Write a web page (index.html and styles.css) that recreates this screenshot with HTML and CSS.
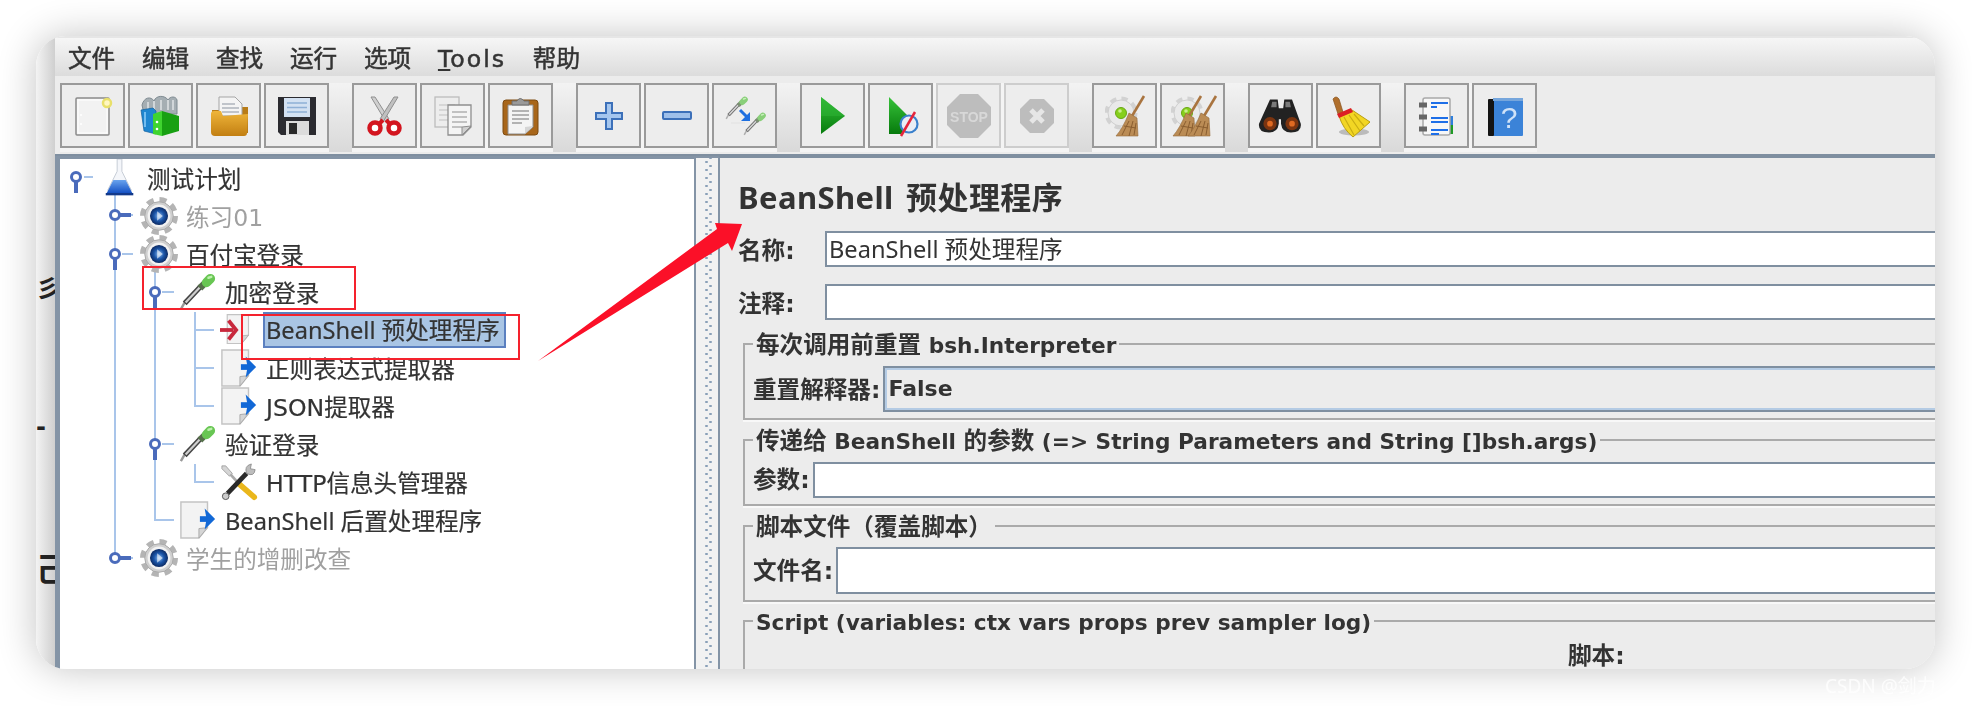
FILE: index.html
```html
<!DOCTYPE html>
<html>
<head>
    <title>BeanShell PreProcessor</title>
    <link rel="stylesheet" href="styles.css">
</head>
<body>
    <svg class="defs">
        <defs>
            <linearGradient id="greenPlay" x1="0" y1="0" x2="0" y2="1">
                <stop offset="0" stop-color="#37c23a"/>
                <stop offset="1" stop-color="#067a0c"/>
            </linearGradient>
            <radialGradient id="blueBall">
                <stop offset="0" stop-color="#8fbdf0"/>
                <stop offset=".55" stop-color="#1b55a8"/>
                <stop offset="1" stop-color="#0c2a63"/>
            </radialGradient>
            <linearGradient id="folderFront" x1="0" y1="0" x2="0" y2="1">
                <stop offset="0" stop-color="#efb53a"/>
                <stop offset="1" stop-color="#c27f12"/>
            </linearGradient>
            <linearGradient id="flaskBlue" x1="0" y1="0" x2="0" y2="1">
                <stop offset="0" stop-color="#6aa4ee"/>
                <stop offset="1" stop-color="#1350c4"/>
            </linearGradient>
            <symbol id="gear" viewBox="0 0 40 40">
                <circle cx="20" cy="20" r="17" fill="none" stroke="#b4b4b4" stroke-width="6" stroke-dasharray="7.3 6.05"/>
                <circle cx="20" cy="20" r="15" fill="#cfcfcf" stroke="#a8a8a8"/>
                <circle cx="20" cy="20" r="12" fill="#f2f2f2"/>
                <circle cx="20" cy="20" r="9.5" fill="url(#blueBall)"/>
                <path d="M18 15l6 5-6 5z" fill="#fff" opacity=".6"/>
            </symbol>
            <symbol id="dropper" viewBox="0 0 40 40">
                <path d="M2 38l4-7" stroke="#999" stroke-width="2.5"/>
                <path d="M6 32l17-18" stroke="#444" stroke-width="5.5"/>
                <path d="M7 31l15-16" stroke="#cfcfcf" stroke-width="2.4"/>
                <path d="M22 16l5-5" stroke="#55704a" stroke-width="7"/>
                <path d="M29 10l4-4" stroke="#68c653" stroke-width="10" stroke-linecap="round"/>
                <path d="M31 5l3-1" stroke="#bdf0ad" stroke-width="2.5" stroke-linecap="round"/>
            </symbol>
            <symbol id="page" viewBox="0 0 40 40">
                <path d="M2 1h28v27l-9 11H2z" fill="#f3f3f3" stroke="#c3c3c3" stroke-width="1.5"/>
                <path d="M30 28l-9 1v10z" fill="#d5d5d5" stroke="#aaa"/>
            </symbol>
            <symbol id="broomTan" viewBox="0 0 40 40" overflow="visible">
                <path d="M39 0L27 20" stroke="#a9743f" stroke-width="2.6"/>
                <path d="M24 17l8 5 1 18H11q7-8 13-23z" fill="#bb8c55" stroke="#94693a" stroke-width=".6"/>
                <path d="M24 25l-7 14M28 25l-4 15M31 27l-2 12M19 30l12 2" stroke="#8a5e30" stroke-width="1"/>
            </symbol>
            <symbol id="gearGreen" viewBox="0 0 40 40">
                <circle cx="16" cy="17" r="14" fill="none" stroke="#d2d2d2" stroke-width="5" stroke-dasharray="6 5"/>
                <circle cx="16" cy="17" r="13" fill="#e9e9e9" stroke="#cfcfcf"/>
                <circle cx="16" cy="17" r="5.5" fill="#86cf1c" stroke="#6aa814"/>
                <circle cx="15" cy="15" r="1.8" fill="#c9f08a"/>
            </symbol>
        </defs>
    </svg>

    <div class="card">
        <div class="strip">
            <span class="scrap scrap-a">彡</span>
            <span class="scrap scrap-b">-</span>
            <span class="scrap scrap-c">己:</span>
        </div>
        <div class="window">
            <div class="menubar">
                <span class="menu">文件</span>
                <span class="menu">编辑</span>
                <span class="menu">查找</span>
                <span class="menu">运行</span>
                <span class="menu">选项</span>
                <span class="menu menu-latin"><u>T</u>ools</span>
                <span class="menu">帮助</span>
            </div>

            <div class="toolbar">
                <div class="group">
                    <div class="btn"><svg viewBox="0 0 40 40"><rect x="3" y="2" width="33" height="37" rx="1" fill="#f2f2f2" stroke="#8a8a8a" stroke-width="1.5"/><rect x="5" y="4" width="29" height="33" fill="none" stroke="#fff"/><circle cx="8" cy="19" r="1" fill="#fff"/><circle cx="8" cy="28" r="1" fill="#fff"/><circle cx="34" cy="7" r="4" fill="#fff7c0" stroke="#e9e06a" stroke-width="2.5"/></svg></div>
                    <div class="btn"><svg viewBox="0 0 40 40"><path d="M1 9c2-8 9-9 12-4 2-6 11-6 14-1 2-4 8-4 9 0v14H3z" fill="#a5aeb3" stroke="#7f8b92"/><path d="M7 6v10M13 5v10M20 4v10M27 4v10M32 4v10" stroke="#dfe4e6" stroke-width="1.5"/><path d="M0 14l12-2 3 3v23L3 35z" fill="#1f86d0" stroke="#12609e" stroke-width=".7"/><path d="M4 16v15" stroke="#73bdf0" stroke-width="2"/><path d="M21 15l17 5v15l-17 5z" fill="#18a012"/><path d="M12 18l9-3v25l-9-2z" fill="#3fd42f"/><circle cx="16" cy="26" r="1.3" fill="#fff"/><circle cx="16" cy="33" r="1.3" fill="#fff"/></svg></div>
                    <div class="btn"><svg viewBox="0 0 40 40"><path d="M3 14h8l2-3h26v26H4z" fill="#b87c17"/><path d="M10 1h16l7 7v20H10z" fill="#f4f4f4" stroke="#a5a5a5"/><path d="M13 8h13M13 12h17M13 16h17M13 20h17" stroke="#aeb4bc" stroke-width="1.3"/><path d="M2 18q0-3 3-3h7l2 5 25-2-1 19q0 3-3 3H6q-4 0-4-4z" fill="url(#folderFront)"/></svg></div>
                    <div class="btn"><svg viewBox="0 0 40 40"><path d="M1 1h38v38H4l-3-3z" fill="#2b2b30"/><rect x="7" y="2" width="26" height="19" fill="#d3e1f2"/><path d="M10 7h20M10 11.500h20M10 16h20" stroke="#8fb0d6" stroke-width="1.5"/><rect x="9" y="25" width="23" height="14" fill="#dcdcdc"/><rect x="12" y="27" width="8" height="11" fill="#2a2a2a"/></svg></div>
                </div>
                <div class="sep"></div>
                <div class="group">
                    <div class="btn"><svg viewBox="0 0 40 40"><path d="M6 1l15 25 3-3L10 1z" fill="#cfcfcf" stroke="#8f8f8f"/><path d="M33 1L18 26l-3-3L29 1z" fill="#c0c0c0" stroke="#8f8f8f"/><circle cx="10" cy="32" r="5.5" fill="#fff" stroke="#d3151f" stroke-width="4.5"/><circle cx="29" cy="32" r="5.5" fill="#fff" stroke="#d3151f" stroke-width="4.5"/><path d="M14 28l4-4M25 28l-4-4" stroke="#d3151f" stroke-width="4"/></svg></div>
                    <div class="btn"><svg viewBox="0 0 40 40"><rect x="2" y="1" width="24" height="30" fill="#ededed" stroke="#bcbcbc" stroke-width="1.3"/><path d="M6 9h16M6 14h16M6 19h16M6 24h16" stroke="#d0d0d0" stroke-width="1.3"/><path d="M15 9h23v22l-8 8H15z" fill="#f4f4f4" stroke="#8f8f8f" stroke-width="1.3"/><path d="M19 16h15M19 21h15M19 26h15M19 31h10" stroke="#b0b0b0" stroke-width="1.5"/><path d="M38 30l-9 1v8z" fill="#cfcfcf" stroke="#8f8f8f"/></svg></div>
                    <div class="btn"><svg viewBox="0 0 40 40"><rect x="2" y="4" width="35" height="35" rx="3" fill="#a8661a" stroke="#7d4a10"/><path d="M7 9h25v22l-8 7H7z" fill="#f4f4f4" stroke="#8f8f8f"/><path d="M11 15h17M11 19h17M11 23h17M11 27h10" stroke="#9d9d9d" stroke-width="1.5"/><path d="M32 30l-8 1v7z" fill="#d5d5d5"/><path d="M11 9V5h5q3-5 7 0h5v4z" fill="#9a9a9a" stroke="#6f6f6f"/></svg></div>
                </div>
                <div class="sep"></div>
                <div class="group">
                    <div class="btn"><svg viewBox="0 0 40 40"><path d="M17 7h6v10h10v6H23v10h-6V23H7v-6h10z" fill="#a5c6ee" stroke="#3c70b9" stroke-width="2"/></svg></div>
                    <div class="btn"><svg viewBox="0 0 40 40"><rect x="6" y="16" width="28" height="7" rx="1" fill="#9fc0ea" stroke="#3c70b9" stroke-width="2"/></svg></div>
                    <div class="btn"><svg viewBox="0 0 40 40"><use href="#dropper" x="0" y="0" width="24" height="24" opacity=".75"/><use href="#dropper" x="18" y="16" width="24" height="24" opacity=".75"/><path d="M6 27h14" stroke="#e4e4e4" stroke-width="1.5"/><path d="M15 14l7 7" stroke="#1e6fe0" stroke-width="3"/><path d="M25 16v9h-9z" fill="#1e6fe0"/></svg></div>
                </div>
                <div class="sep"></div>
                <div class="group">
                    <div class="btn"><svg viewBox="0 0 40 40"><path d="M8 1l24 19L8 38z" fill="url(#greenPlay)"/><path d="M8 1l24 19H8z" fill="#2eb334" opacity=".55"/></svg></div>
                    <div class="btn"><svg viewBox="0 0 40 40"><path d="M8 1l24 24-12 13H8z" fill="url(#greenPlay)"/><circle cx="28" cy="28" r="8.500" fill="#e9eef5" stroke="#3a80cc" stroke-width="2.2"/><path d="M20 40L34 16" stroke="#e5243b" stroke-width="2.5"/></svg></div>
                    <div class="btn off"><svg class="big" viewBox="0 0 44 44"><path d="M13 0h18l13 13v18L31 44H13L0 31V13z" fill="#bdbdbd"/><text x="22" y="28" class="stop-text">STOP</text></svg></div>
                    <div class="btn off"><svg viewBox="0 0 40 40"><path d="M13 3h14l10 10v14L27 37H13L3 27V13z" fill="#bdbdbd"/><path d="M14 14l12 12M26 14L14 26" stroke="#e6e6e6" stroke-width="5"/></svg></div>
                </div>
                <div class="sep"></div>
                <div class="group">
                    <div class="btn"><svg viewBox="0 0 40 40"><use href="#gearGreen" width="40" height="40"/><use href="#broomTan" width="40" height="40"/></svg></div>
                    <div class="btn"><svg viewBox="0 0 40 40"><use href="#gearGreen" x="-2" width="40" height="40"/><use href="#broomTan" x="-11" width="40" height="40"/><use href="#broomTan" x="4" width="40" height="40"/></svg></div>
                </div>
                <div class="sep"></div>
                <div class="group">
                    <div class="btn"><svg class="big" viewBox="0 0 40 40"><g transform="translate(0 -3)"><path d="M10 8h7l1 8h4l1-8h7l8 22q1 8-9 8-8 0-9-8v-4h-2v4q-1 8-9 8-10 0-9-8z" fill="#222"/><path d="M12 10h4v5h-5zM24 10h4l1 5h-5z" fill="#7a7a7a"/><circle cx="10" cy="30" r="6" fill="#7a3410"/><circle cx="30" cy="30" r="6" fill="#7a3410"/><circle cx="10" cy="30" r="2.6" fill="#e06a22"/><circle cx="30" cy="30" r="2.6" fill="#e06a22"/></g></svg></div>
                    <div class="btn"><svg viewBox="0 0 40 40"><ellipse cx="25" cy="36" rx="15" ry="3.5" fill="#bbb"/><path d="M4 3q3-4 6 0l4 13-5 2z" fill="#b06f2c" stroke="#8a5520" stroke-width=".7"/><path d="M10 20l13-6 18 12-17 15q-10-8-14-21z" fill="#f2d624" stroke="#b99e10"/><path d="M8 18l14-6 2 4-14 6z" fill="#dc1f24"/><path d="M15 21l10 18M20 19l11 16M25 18l10 12" stroke="#c9ad14" stroke-width="1.2"/></svg></div>
                </div>
                <div class="sep"></div>
                <div class="group">
                    <div class="btn"><svg viewBox="0 0 40 40"><rect x="30" y="20" width="6" height="9" fill="#2f7fdc"/><rect x="30" y="29" width="6" height="9" fill="#1f9a25"/><rect x="6" y="2" width="27" height="37" rx="2" fill="#f7f7f7" stroke="#a9a9a9" stroke-width="1.5"/><path d="M2 9h8M2 21h8M2 33h8" stroke="#666" stroke-width="5"/><path d="M14 7h17M14 11h6M14 22h17M14 26h17M14 34h17M14 38h8" stroke="#1e6fe8" stroke-width="2"/></svg></div>
                    <div class="btn"><svg viewBox="0 0 40 40"><rect x="8" y="2" width="30" height="38" rx="1" fill="#3b83d8"/><rect x="3" y="3" width="6" height="37" rx="1" fill="#141414"/><rect x="8" y="2" width="30" height="3" fill="#76a6dc"/><text x="24" y="32" class="help-text">?</text></svg></div>
                </div>
            </div>

            <div class="split">
                <div class="tree">
                    <svg class="links" viewBox="0 0 600 510">
                        <path class="link" d="M55 30V400M95 112V361H114M135 153V248M135 171H154M135 209H154M135 247H154M135 305V323H154M24 18H33M62 56H73M62 95H73M102 133H114M102 285H114M62 399H73"/>
                        <g class="knob"><path d="M16 18V34"/><circle cx="16" cy="18" r="4.500"/></g>
                        <g class="knob"><path d="M55 56H71"/><circle cx="55" cy="56" r="4.500"/></g>
                        <g class="knob"><path d="M55 95V111"/><circle cx="55" cy="95" r="4.500"/></g>
                        <g class="knob"><path d="M95 133V149"/><circle cx="95" cy="133" r="4.500"/></g>
                        <g class="knob"><path d="M95 285V301"/><circle cx="95" cy="285" r="4.500"/></g>
                        <g class="knob"><path d="M55 399H71"/><circle cx="55" cy="399" r="4.500"/></g>
                    </svg>
                    <div class="row l0">
                        <svg class="ticon" viewBox="0 0 40 40"><path d="M17 0h5v13l10 20H7l10-20z" fill="#f4f6fa" stroke="#c4cad4"/><path d="M13 22h13l7 14H6z" fill="url(#flaskBlue)"/><path d="M5 37h29" stroke="#12398a" stroke-width="2.500"/></svg>
                        <span>测试计划</span>
                    </div>
                    <div class="row l1 muted"><svg class="ticon"><use href="#gear"/></svg><span>练习01</span></div>
                    <div class="row l1"><svg class="ticon"><use href="#gear"/></svg><span>百付宝登录</span></div>
                    <div class="row l2"><svg class="ticon"><use href="#dropper"/></svg><span>加密登录</span></div>
                    <div class="row l3">
                        <svg class="ticon" viewBox="0 0 40 40"><use href="#page" x="6" y="0" width="32" height="38"/><path d="M0 20h14" stroke="#c8283c" stroke-width="4"/><path d="M9 10l8 10-8 10" fill="none" stroke="#c8283c" stroke-width="4"/></svg>
                        <span class="picked narrow">BeanShell 预处理程序</span>
                    </div>
                    <div class="row l3">
                        <svg class="ticon" viewBox="0 0 40 40"><use href="#page"/><path d="M22 19h10" stroke="#1268d6" stroke-width="6"/><path d="M27 8l11 11-11 11 2-11z" fill="#1268d6"/></svg>
                        <span>正则表达式提取器</span>
                    </div>
                    <div class="row l3">
                        <svg class="ticon" viewBox="0 0 40 40"><use href="#page"/><path d="M22 19h10" stroke="#1268d6" stroke-width="6"/><path d="M27 8l11 11-11 11 2-11z" fill="#1268d6"/></svg>
                        <span>JSON提取器</span>
                    </div>
                    <div class="row l2"><svg class="ticon"><use href="#dropper"/></svg><span>验证登录</span></div>
                    <div class="row l3">
                        <svg class="ticon" viewBox="0 0 40 40"><path d="M2 3h4l7 8-3 3-8-8z" fill="#d5d5d5" stroke="#888" stroke-width=".7"/><path d="M11 12l10 11" stroke="#aaa" stroke-width="3"/><path d="M20 22l16 14" stroke="#eab71c" stroke-width="6" stroke-linecap="round"/><path d="M8 32L28 11" stroke="#2a2a2a" stroke-width="5"/><path d="M28 11q-3-8 5-10l-1 5 5 1q-1 8-9 4z" fill="#bdbdbd" stroke="#777" stroke-width=".7"/><circle cx="6" cy="35" r="3.500" fill="#ccc" stroke="#555"/></svg>
                        <span>HTTP信息头管理器</span>
                    </div>
                    <div class="row l2">
                        <svg class="ticon" viewBox="0 0 40 40"><use href="#page"/><path d="M22 19h10" stroke="#1268d6" stroke-width="6"/><path d="M27 8l11 11-11 11 2-11z" fill="#1268d6"/></svg>
                        <span class="narrow">BeanShell 后置处理程序</span>
                    </div>
                    <div class="row l1 muted"><svg class="ticon"><use href="#gear"/></svg><span>学生的增删改查</span></div>
                </div>

                <div class="divider"></div>

                <div class="pane">
                    <h1 class="title">BeanShell 预处理程序</h1>
                    <div class="field first">
                        <label class="name-label">名称:</label>
                        <div class="input narrow">BeanShell 预处理程序</div>
                    </div>
                    <div class="field">
                        <label class="name-label">注释:</label>
                        <div class="input"></div>
                    </div>

                    <fieldset class="box box-combo">
                        <legend><span class="zh">每次调用前重置</span> bsh.Interpreter</legend>
                        <div class="field">
                            <label>重置解释器:</label>
                            <div class="combo">False</div>
                        </div>
                    </fieldset>
                    <fieldset class="box">
                        <legend><span class="zh">传递给</span> BeanShell <span class="zh">的参数</span> (=&gt; String Parameters and String []bsh.args)</legend>
                        <div class="field">
                            <label>参数:</label>
                            <div class="input"></div>
                        </div>
                    </fieldset>
                    <fieldset class="box">
                        <legend><span class="zh">脚本文件（覆盖脚本）</span></legend>
                        <div class="field">
                            <label>文件名:</label>
                            <div class="input tall"></div>
                        </div>
                    </fieldset>
                    <fieldset class="box box-script">
                        <legend>Script (variables: ctx vars props prev sampler log)</legend>
                        <div class="script-label">脚本:</div>
                    </fieldset>
                </div>
            </div>
        </div>
    </div>

    <!-- red marks drawn on top of the screenshot -->
    <svg class="marks" viewBox="0 0 1972 706">
        <rect x="143" y="267" width="212" height="42"/>
        <rect x="242" y="315" width="277" height="44"/>
        <path class="arrow" d="M538 361L717 229 715 223 742 224 732 251 728 243z"/>
    </svg>

    <div class="mark">CSDN @剑力</div>
</body>
</html>
```

FILE: styles.css
```css
* {
    box-sizing: border-box;
}
html, body {
    margin: 0;
    height: 100%;
}
body {
    position: relative;
    height: 706px;
    overflow: hidden;
    background: #fff;
    font-family: "DejaVu Sans", "Noto Sans CJK SC", sans-serif;
    font-size: 23.6px;
    color: #333;
}
.defs {
    position: absolute;
    width: 0;
    height: 0;
}
.narrow {
    font-family: "Noto Sans", "Noto Sans CJK SC", sans-serif;
}

/* outer rounded picture */
.card {
    display: flex;
    margin: 36px 37px 0 36px;
    height: 633px;
    border-radius: 30px;
    overflow: hidden;
    box-shadow: 0 0 38px rgba(0, 0, 0, 0.24);
    background: #fff;
}
.strip {
    flex: 0 0 19px;
    display: flex;
    flex-direction: column;
    overflow: hidden;
    background: linear-gradient(90deg, #f3f3f3, #cfcfcf);
    color: #222;
    font-weight: 700;
    font-size: 24px;
    line-height: 30px;
}
.scrap {
    white-space: nowrap;
}
.scrap-a {
    margin-top: 238px;
}
.scrap-b {
    margin-top: 108px;
    height: 30px;
}
.scrap-c {
    margin-top: 108px;
    font-size: 32px;
    line-height: 40px;
}
.window {
    flex: 1;
    min-width: 0;
    display: flex;
    flex-direction: column;
    background: #ececec;
    filter: blur(0.5px);
}

/* menu */
.menubar {
    display: flex;
    gap: 26.8px;
    height: 44px;
    padding: 4px 0 4px 13px;
    border-top: 2px solid #e6e6e6;
    border-bottom: 4px solid #ececec;
    line-height: 34px;
    background: linear-gradient(#f6f6f6, #dcdcdc);
    -webkit-text-stroke: 0.5px #333;
}
.menu-latin {
    letter-spacing: 2px;
}

/* toolbar */
.toolbar {
    display: flex;
    align-items: flex-start;
    height: 76px;
    padding: 3px 0 0 5px;
    border-bottom: 2px solid #7f8fa0;
}
.group {
    display: flex;
    gap: 3px;
    padding-bottom: 4px;
    background: #f4f4f4;
}
.sep {
    width: 23px;
    height: 69px;
    background: linear-gradient(#f3f3f3, #d9d9d9);
}
.btn {
    display: flex;
    align-items: center;
    justify-content: center;
    width: 65px;
    height: 65px;
    border: 2px solid #9a9a9a;
    background: #ededed;
}
.btn svg {
    width: 40px;
    height: 40px;
    overflow: visible;
}
.btn svg.big {
    width: 44px;
    height: 44px;
}
.btn.off {
    border-color: #cdcdcd;
}
.stop-text {
    font-family: "Liberation Sans", sans-serif;
    font-size: 14px;
    font-weight: 700;
    fill: #d8d8d8;
    text-anchor: middle;
}
.help-text {
    font-family: "Liberation Sans", sans-serif;
    font-size: 30px;
    fill: #cfe2f8;
    text-anchor: middle;
}

/* tree on the left */
.split {
    flex: 1;
    display: flex;
    min-height: 0;
}
.tree {
    position: relative;
    flex: 0 0 641px;
    background: #fff;
    border-left: 5px solid #8494a6;
    border-top: 3px solid #8494a6;
    border-right: 2px solid #8494a6;
}
.links {
    position: absolute;
    left: 0;
    top: 0;
    width: 600px;
    height: 510px;
}
.link {
    fill: none;
    stroke: #a9c5ea;
    stroke-width: 2;
}
.knob path {
    stroke: #4a6bbb;
    stroke-width: 4;
}
.knob circle {
    fill: #fff;
    stroke: #4a6bbb;
    stroke-width: 3;
}
.row {
    position: relative;
    display: flex;
    align-items: center;
    gap: 8px;
    height: 38px;
    white-space: nowrap;
    -webkit-text-stroke: 0.2px #333;
}
.l0 { padding-left: 41px; }
.l1 { padding-left: 80px; }
.l2 { padding-left: 119px; }
.l3 { padding-left: 160px; }
.muted {
    color: #a0a0a0;
    -webkit-text-stroke: 0;
}
.ticon {
    flex: none;
    width: 38px;
    height: 38px;
}
.picked {
    margin-left: -3px;
    padding: 0 0 0 1px;
    width: 243px;
    height: 36px;
    line-height: 32px;
    background: #a9c5e4;
    border: 2px solid #5b80c0;
}

/* splitter */
.divider {
    flex: 0 0 22px;
    background:
        radial-gradient(circle, #8aa0b8 1px, transparent 1.5px) 8px 0 / 5px 8px repeat-y,
        radial-gradient(circle, #8aa0b8 1px, transparent 1.5px) 12px 4px / 5px 8px repeat-y,
        #f2f2f2;
    border-top: 2px solid #8494a6;
}

/* form on the right */
.pane {
    flex: 1;
    min-width: 0;
    overflow: hidden;
    padding-left: 18px;
    border-left: 2px solid #8494a6;
    border-top: 2px solid #7f8fa0;
}
.title {
    margin: 21px 0 0;
    font-family: "Noto Sans", "Noto Sans CJK SC", sans-serif;
    font-size: 31px;
    line-height: 36px;
    font-weight: 700;
    letter-spacing: 0.4px;
    word-spacing: 4px;
}
.field {
    display: flex;
    align-items: center;
    margin-top: 17px;
}
.field.first {
    margin-top: 16px;
}
.name-label {
    flex: 0 0 87px;
}
label {
    font-weight: 700;
    padding-right: 3px;
    white-space: nowrap;
}
.box label {
    padding-bottom: 3px;
}
.input {
    flex: 1;
    height: 36px;
    padding-left: 2px;
    line-height: 32px;
    background: #fff;
    border: 2px solid #7f8fa0;
    border-right: none;
}
.input.tall {
    height: 47px;
}
.combo {
    flex: 1;
    height: 46px;
    padding-left: 3px;
    line-height: 42px;
    font-weight: 700;
    font-size: 22px;
    border: 2px solid #7f8fa0;
    border-right: none;
    box-shadow: inset 2px 2px 0 #b4cbe4, inset 0 -2px 0 #b4cbe4;
}
.box {
    margin: 4px 0 0 5px;
    padding: 6px 0 6px 8px;
    border: 2px solid #aaa;
    border-right: none;
    box-shadow: 0 2px 0 #f8f8f8;
}
.box .field {
    margin-top: 0;
}
.box-combo {
    margin-top: 8px;
    padding-top: 7px;
}
/* text sits a little under the border line */
.box legend {
    padding: 4px 3px 0;
    font-weight: 700;
    font-size: 21.65px;
    line-height: 26px;
    white-space: nowrap;
}
.zh {
    font-size: 23.6px;
}
.box-script {
    padding-top: 7px;
    height: 120px;
}
.script-label {
    padding-left: 815px;
    font-weight: 700;
    line-height: 26px;
}

/* annotations */
.marks {
    position: absolute;
    left: 0;
    top: 0;
    width: 1972px;
    height: 706px;
}
.marks rect {
    fill: none;
    stroke: #f5222d;
    stroke-width: 2;
}
.arrow {
    fill: #fb1028;
}
.mark {
    position: absolute;
    left: 1825px;
    top: 671px;
    font-family: "Noto Sans", "Noto Sans CJK SC", sans-serif;
    font-size: 19px;
    color: #fff;
    opacity: 0.8;
}
```
